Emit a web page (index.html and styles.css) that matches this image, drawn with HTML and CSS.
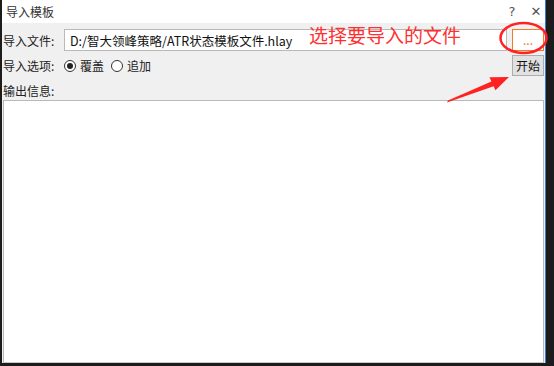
FILE: index.html
```html
<!DOCTYPE html>
<html lang="zh-CN">
<head>
    <meta charset="UTF-8">
    <title>导入模板</title>
    <link rel="stylesheet" href="styles.css">
</head>
<body>
    <div class="window">
        <div class="titlebar">
            <span class="title">导入模板</span>
            <span class="title-btn help">?</span>
            <span class="title-btn close">✕</span>
        </div>
        <div class="content">
            <div class="row">
                <span class="label">导入文件:</span>
                <div class="file-input">D:/智大领峰策略/ATR状态模板文件.hlay</div>
                <button class="btn browse">...</button>
            </div>
            <div class="row">
                <span class="label">导入选项:</span>
                <label class="radio"><span class="dot checked"></span>覆盖</label>
                <label class="radio"><span class="dot"></span>追加</label>
                <span class="spacer"></span>
                <button class="btn start">开始</button>
            </div>
            <div class="row info">
                <span class="label">输出信息:</span>
            </div>
            <div class="output"></div>
        </div>

        <!-- 标注 -->
        <span class="note">选择要导入的文件</span>
        <svg class="marks" width="554" height="366" viewBox="0 0 554 366">
            <ellipse cx="523.5" cy="38" rx="23" ry="15" fill="none" stroke="#f22" stroke-width="2.5"/>
            <polygon points="447,102.5 448,100.5 491.4,81.6 489.5,77.3 509,77 495.5,90.3 493.6,86.2" fill="#f22"/>
        </svg>
    </div>
</body>
</html>
```

FILE: styles.css
```css
body {
    margin: 0;
    padding: 0 8px 3px 2px;
    background-color: #1c1c1c;
    font-family: "Noto Sans CJK SC", "Microsoft YaHei", sans-serif;
    font-size: 12px;
    color: #222;
}

.window {
    position: relative;
    height: 363px;
    box-sizing: border-box;
    background-color: #f0f0f0;
    border-right: 1px solid #3a7bd5;
    display: flex;
    flex-direction: column;
}

.titlebar {
    height: 23px;
    background-color: #fff;
    display: flex;
    align-items: center;
    padding: 0 0 0 4px;
    flex-shrink: 0;
}

.title {
    flex: 1;
    color: #333;
}

.title-btn {
    width: 18px;
    text-align: center;
    color: #555;
    font-family: "DejaVu Sans", sans-serif;
    font-size: 13px;
}

.help {
    margin-right: 6px;
}

.content {
    flex: 1;
    display: flex;
    flex-direction: column;
    padding: 6px 1px 0 1px;
}

.row {
    display: flex;
    align-items: center;
    gap: 5px;
}

.row + .row {
    margin-top: 4px;
}

.row.info {
    margin-top: 6px;
}

.label {
    width: 56px;
    flex-shrink: 0;
}

.file-input {
    flex: 1;
    height: 22px;
    line-height: 22px;
    padding: 0 5px;
    background-color: #fff;
    border: 1px solid #b9b9b9;
    font-size: 12.5px;
    color: #111;
    box-sizing: border-box;
    white-space: nowrap;
}

.btn {
    width: 32px;
    padding: 0;
    font-family: inherit;
    font-size: 12px;
    color: #111;
    background-color: #e1e1e1;
    border: 1px solid #adadad;
    box-sizing: border-box;
}

.browse {
    height: 22px;
    background-color: #fff;
    border-color: #f07a2a;
    color: #f07a2a;
    line-height: 20px;
}

.start {
    height: 21px;
}

.radio {
    display: flex;
    align-items: center;
    gap: 4px;
    margin-right: 2px;
}

.dot {
    width: 10px;
    height: 10px;
    border: 1px solid #333;
    border-radius: 50%;
    background-color: #fff;
    display: flex;
    align-items: center;
    justify-content: center;
}

.dot.checked::after {
    content: "";
    width: 6px;
    height: 6px;
    border-radius: 50%;
    background-color: #222;
}

.spacer {
    flex: 1;
}

.output {
    flex: 1;
    margin-top: 1px;
    background-color: #fff;
    border: 1px solid #b9b9b9;
    border-bottom-color: #c8c8c8;
}

.note {
    position: absolute;
    left: 307px;
    top: 21px;
    font-size: 19px;
    color: #ff3030;
    white-space: nowrap;
}

.marks {
    position: absolute;
    left: -2px;
    top: 0;
    pointer-events: none;
}
```
